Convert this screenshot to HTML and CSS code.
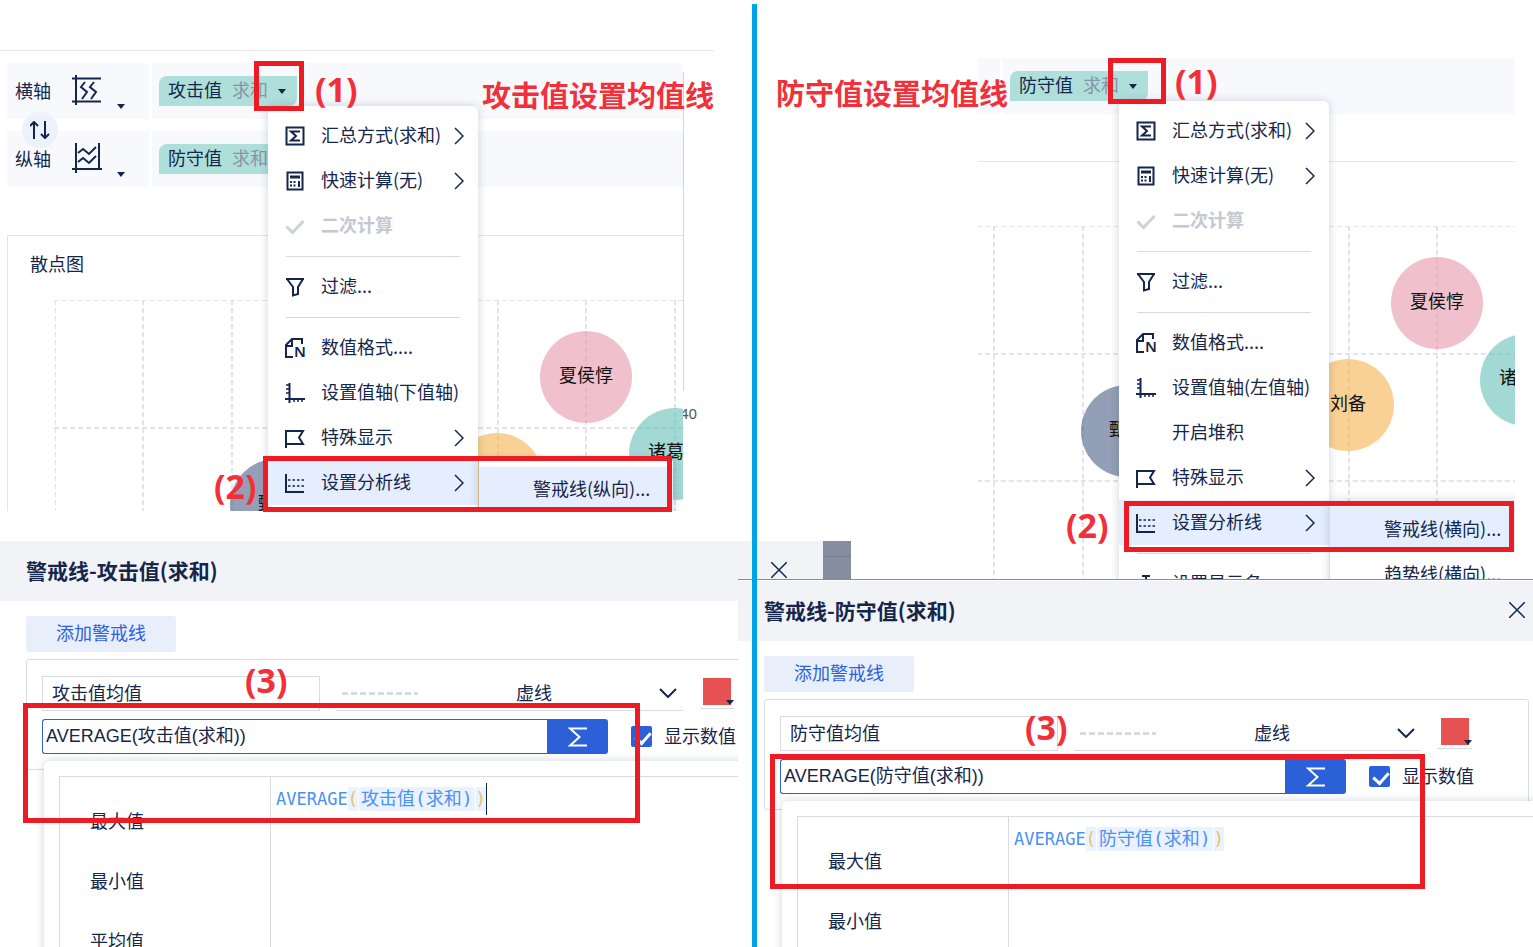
FILE: index.html
```html
<!DOCTYPE html>
<html lang="zh-CN">
<head>
  <meta charset="UTF-8">
  <title>设置均值线</title>
  <meta name="viewport" content="width=device-width, initial-scale=1.0">
  <link rel="stylesheet" href="styles.css">
</head>
<body>
  <!-- shared icons -->
  <svg class="sprite" aria-hidden="true">
    <symbol id="i-sum" viewBox="0 0 20 20"><path d="M1.5 1.5h17v17h-17z"/><path d="M15 5.5H6l5 4.5-5 4.5h9"/></symbol>
    <symbol id="i-calc" viewBox="0 0 20 20"><path d="M2.5 1.5h15v17h-15z"/><path d="M5 6h10" stroke-width="3"/><path d="M5 11h2m1.500 0h2M5 14.500h2m1.500 0h2M14 10v6"/></symbol>
    <symbol id="i-check" viewBox="0 0 20 20"><path d="M1.500 10.500l6 6L18.500 5" stroke-width="3"/></symbol>
    <symbol id="i-filter" viewBox="0 0 20 20"><path d="M1 2h18M2 2l6 8v8.500l5-1.500v-7l5-8"/></symbol>
    <symbol id="i-format" viewBox="0 0 20 20"><path d="M8 19H1V7l6-6h10v5M1 8h6V2"/><text x="9" y="19" font-size="15">N</text></symbol>
    <symbol id="i-axis" viewBox="0 0 20 20"><path d="M4.500 0v20M0 16h20"/><path d="M1 2h3M1 6h3M1 10h3M9 16v3M13 16v3M17 16v3" stroke-width="1.500"/></symbol>
    <symbol id="i-flag" viewBox="0 0 20 20"><path d="M1 20V3h17l-4 6.500 4 6.500H1"/></symbol>
    <symbol id="i-lines" viewBox="0 0 20 20"><path d="M1 1v18h18"/><path d="M3 7h16M3 13h16" stroke-width="1.500" stroke-dasharray="2.500 2"/></symbol>
    <symbol id="i-name" viewBox="0 0 20 20"><path d="M6 2h8M10 2v16M0 7h5M15 7h5"/></symbol>
    <symbol id="i-right" viewBox="0 0 10 18"><path d="M1 1l8 8-8 8"/></symbol>
    <symbol id="i-down" viewBox="0 0 18 10"><path d="M1 1l8 8 8-8"/></symbol>
    <symbol id="i-close" viewBox="0 0 16 16"><path d="M0 0l16 16M16 0L0 16"/></symbol>
    <symbol id="i-sigma" viewBox="0 0 20 20"><path d="M19 1.500H2l9.500 8.500L2 18.500h17"/></symbol>
    <symbol id="i-caret" viewBox="0 0 8 5"><path d="M0 0h8L4 5z"/></symbol>
    <symbol id="plot" viewBox="0 0 900 700">
      <g class="gridline">
        <path d="M55.500 300v400" stroke-width="1"/>
        <path d="M143 300v400M232 300v400M320 300v400M409 300v400M498 300v400M586 300v400M675 300v400"/>
        <path d="M54 300.500h646" stroke-width="1"/>
        <path d="M54 428h646M54 555h646"/>
      </g>
      <g stroke="none" fill-opacity=".6">
        <circle cx="276" cy="505" r="46" fill="#4a5f85"/>
        <circle cx="497" cy="479" r="46" fill="#f6b34d"/>
        <circle cx="586" cy="377" r="46" fill="#e698aa"/>
        <circle cx="675" cy="454" r="46" fill="#64c0b7"/>
      </g>
      <text x="276" y="510">甄姬</text>
      <text x="497" y="484">刘备</text>
      <text x="586" y="382">夏侯惇</text>
      <text x="675" y="458">诸葛亮</text>
    </symbol>
  </svg>

  <main class="board">
    <section class="half">
      <div class="scene scene-attack">
        <div class="axis-row">
          <div class="axis-label">
            <span>横轴</span>
            <svg class="axis-icon" viewBox="0 0 30 30"><path d="M4 0v30M0 3.500h29M0 26.500h29"/><path d="M13 7l-4 5 6 5-5 7M22 7l-4 5 6 5-5 7"/></svg>
            <svg class="caret"><use href="#i-caret"/></svg>
          </div>
          <div class="axis-drop">
            <div class="pill">
              <span>攻击值</span><span class="agg">求和</span><svg class="caret"><use href="#i-caret"/></svg>
              <ul class="menu">
                <li><button><svg class="icon"><use href="#i-sum"/></svg>汇总方式(求和)<svg class="more"><use href="#i-right"/></svg></button></li>
                <li><button><svg class="icon"><use href="#i-calc"/></svg>快速计算(无)<svg class="more"><use href="#i-right"/></svg></button></li>
                <li><button disabled><svg class="icon"><use href="#i-check"/></svg>二次计算</button></li>
                <li class="sep"></li>
                <li><button><svg class="icon"><use href="#i-filter"/></svg>过滤...</button></li>
                <li class="sep"></li>
                <li><button><svg class="icon"><use href="#i-format"/></svg>数值格式....</button></li>
                <li><button><svg class="icon"><use href="#i-axis"/></svg>设置值轴(下值轴)</button></li>
                <li><button><svg class="icon"><use href="#i-flag"/></svg>特殊显示<svg class="more"><use href="#i-right"/></svg></button></li>
                <li class="open">
                  <button><svg class="icon"><use href="#i-lines"/></svg>设置分析线<svg class="more"><use href="#i-right"/></svg></button>
                  <ul class="submenu">
                    <li class="open"><button>警戒线(纵向)...</button></li>
                  </ul>
                </li>
              </ul>
            </div>
          </div>
        </div>
        <button class="swap" aria-label="交换"><svg viewBox="0 0 20 18"><path d="M4 18V1M0 5l4-4 4 4M15 0v17M11 13l4 4 4-4"/></svg></button>
        <div class="axis-row">
          <div class="axis-label">
            <span>纵轴</span>
            <svg class="axis-icon" viewBox="0 0 30 30"><path d="M4 0v30M27 0v27M0 26h30"/><path d="M6 10l5-4 6 5 7-7M6 19l5-4 6 5 7-7"/></svg>
            <svg class="caret"><use href="#i-caret"/></svg>
          </div>
          <div class="axis-drop">
            <div class="pill"><span>防守值</span><span class="agg">求和</span><svg class="caret"><use href="#i-caret"/></svg></div>
          </div>
        </div>
        <div class="chart-card">
          <h3>散点图</h3>
          <div class="chart-body">
            <svg class="plot-attack" viewBox="54 300 629 211"><use href="#plot" width="900" height="700"/></svg>
            <span class="tick">40</span>
          </div>
        </div>
      </div>

      <div class="dialog">
        <header>
          <h2>警戒线-攻击值(求和)</h2>
          <button class="close" aria-label="关闭"><svg><use href="#i-close"/></svg></button>
        </header>
        <div class="dialog-body">
          <button class="add">添加警戒线</button>
          <div class="panel">
            <div class="panel-row">
              <input class="line-name" type="text" value="攻击值均值" aria-label="名称">
              <label class="line-style">
                <span class="dashes"></span>
                <select aria-label="线型"><option>虚线</option></select>
                <svg class="down"><use href="#i-down"/></svg>
              </label>
              <button class="color" aria-label="颜色"><span class="swatch"></span><svg class="caret"><use href="#i-caret"/></svg></button>
            </div>
            <div class="panel-row">
              <input class="formula" type="text" value="AVERAGE(攻击值(求和))" aria-label="公式">
              <button class="sigma" aria-label="函数"><svg><use href="#i-sigma"/></svg></button>
              <label class="show"><input type="checkbox" checked><span>显示数值</span></label>
            </div>
            <div class="popup">
              <div class="editor">
                <ul class="functions">
                  <li>最大值</li>
                  <li>最小值</li>
                  <li>平均值</li>
                </ul>
                <div class="code"><span>AVERAGE</span><span class="paren">(</span><span class="chip">攻击值(求和)</span><span class="paren">)</span><span class="cursor"></span></div>
              </div>
            </div>
          </div>
        </div>
      </div>

      <strong class="note title-attack">攻击值设置均值线</strong>
      <strong class="note num attack-1">(1)</strong>
      <strong class="note num attack-2">(2)</strong>
      <strong class="note num attack-3">(3)</strong>
      <div class="frame frame-attack-1"></div>
      <div class="frame frame-attack-2"></div>
      <div class="frame frame-attack-3"></div>
    </section>

    <div class="divider"></div>

    <section class="half">
      <div class="scene scene-defend">
        <div class="axis-row">
          <div class="axis-label"></div>
          <div class="axis-drop">
            <div class="pill">
              <span>防守值</span><span class="agg">求和</span><svg class="caret"><use href="#i-caret"/></svg>
              <ul class="menu">
                <li><button><svg class="icon"><use href="#i-sum"/></svg>汇总方式(求和)<svg class="more"><use href="#i-right"/></svg></button></li>
                <li><button><svg class="icon"><use href="#i-calc"/></svg>快速计算(无)<svg class="more"><use href="#i-right"/></svg></button></li>
                <li><button disabled><svg class="icon"><use href="#i-check"/></svg>二次计算</button></li>
                <li class="sep"></li>
                <li><button><svg class="icon"><use href="#i-filter"/></svg>过滤...</button></li>
                <li class="sep"></li>
                <li><button><svg class="icon"><use href="#i-format"/></svg>数值格式....</button></li>
                <li><button><svg class="icon"><use href="#i-axis"/></svg>设置值轴(左值轴)</button></li>
                <li><button><span class="icon"></span>开启堆积</button></li>
                <li><button><svg class="icon"><use href="#i-flag"/></svg>特殊显示<svg class="more"><use href="#i-right"/></svg></button></li>
                <li class="open">
                  <button><svg class="icon"><use href="#i-lines"/></svg>设置分析线<svg class="more"><use href="#i-right"/></svg></button>
                  <ul class="submenu">
                    <li class="open"><button>警戒线(横向)...</button></li>
                    <li><button>趋势线(横向)...</button></li>
                  </ul>
                </li>
                <li class="sep"></li>
                <li><button><svg class="icon"><use href="#i-name"/></svg>设置显示名</button></li>
              </ul>
            </div>
          </div>
        </div>
        <hr>
        <svg class="plot-defend" viewBox="127 300 537 353"><use href="#plot" width="900" height="700"/></svg>
      </div>

      <div class="dialog dialog-defend">
        <header>
          <h2>警戒线-防守值(求和)</h2>
          <button class="close" aria-label="关闭"><svg><use href="#i-close"/></svg></button>
        </header>
        <div class="dialog-body">
          <button class="add">添加警戒线</button>
          <div class="panel">
            <div class="panel-row">
              <input class="line-name" type="text" value="防守值均值" aria-label="名称">
              <label class="line-style">
                <span class="dashes"></span>
                <select aria-label="线型"><option>虚线</option></select>
                <svg class="down"><use href="#i-down"/></svg>
              </label>
              <button class="color" aria-label="颜色"><span class="swatch"></span><svg class="caret"><use href="#i-caret"/></svg></button>
            </div>
            <div class="panel-row">
              <input class="formula" type="text" value="AVERAGE(防守值(求和))" aria-label="公式">
              <button class="sigma" aria-label="函数"><svg><use href="#i-sigma"/></svg></button>
              <label class="show"><input type="checkbox" checked><span>显示数值</span></label>
            </div>
            <div class="popup">
              <div class="editor">
                <ul class="functions">
                  <li>最大值</li>
                  <li>最小值</li>
                </ul>
                <div class="code"><span>AVERAGE</span><span class="paren">(</span><span class="chip">防守值(求和)</span><span class="paren">)</span></div>
              </div>
            </div>
          </div>
        </div>
      </div>

      <strong class="note title-defend">防守值设置均值线</strong>
      <strong class="note num defend-1">(1)</strong>
      <strong class="note num defend-2">(2)</strong>
      <strong class="note num defend-3">(3)</strong>
      <div class="frame frame-defend-1"></div>
      <div class="frame frame-defend-2"></div>
      <div class="frame frame-defend-3"></div>
    </section>
  </main>
</body>
</html>
```

FILE: styles.css
```css
* {
  box-sizing: border-box;
}

body {
  margin: 0;
  background: #fff;
  color: #14264b;
  font-family: "Noto Sans CJK SC", sans-serif;
  font-size: 18px;
  line-height: 24px;
}

button, input, select {
  margin: 0;
  padding: 0;
  border: none;
  border-radius: 0;
  background: none;
  color: inherit;
  font: inherit;
}

ul, h2, h3 {
  margin: 0;
  padding: 0;
  list-style: none;
}

svg {
  flex: none;
  fill: none;
  stroke: #14264b;
  stroke-width: 2;
}

.sprite {
  position: absolute;
  width: 0;
  height: 0;
}

.sprite text {
  fill: #14264b;
  stroke: none;
  font-family: "Noto Sans", sans-serif;
  font-weight: 600;
}

#plot text {
  fill: #111;
  font-family: "Noto Sans CJK SC", sans-serif;
  font-size: 18px;
  font-weight: 400;
  text-anchor: middle;
}

.gridline {
  stroke: #e4e4e6;
  stroke-dasharray: 5 3;
}

.board {
  display: grid;
  grid-template-columns: 752fr 5px 776fr;
  height: 100vh;
  overflow: hidden;
}

.half {
  position: relative;
  display: flex;
  flex-direction: column;
  min-width: 0;
}

.divider {
  position: relative;
  z-index: 3;
  margin-top: 4px;
  background: #00a2e8;
}

/* axes */

.scene {
  position: relative;
  flex: none;
}

.scene-attack {
  height: 511px;
  width: 714px;
  margin-bottom: 30px;
  padding: 50px 31px 0 7px;
  overflow: hidden;
}

.scene-attack::before {
  content: "";
  display: block;
  height: 1px;
  margin: 0 -31px 12px -7px;
  background: #e3e4ee;
}

.scene-attack::after {
  content: "";
  position: absolute;
  top: 72px;
  right: 30px;
  width: 1px;
  height: 319px;
  background: #d4d5d9;
}

.scene-defend {
  height: 579px;
  margin: 0 18px 0 221px;
  padding-top: 58px;
  overflow: hidden;
}

.scene-defend hr {
  height: 1px;
  margin: 47px 0 64px;
  border: none;
  background: #e3e5ea;
}

.axis-row {
  display: flex;
  gap: 3px;
  height: 56px;
  margin-bottom: 12px;
}

.axis-label {
  display: flex;
  align-items: center;
  width: 142px;
  padding: 0 0 2px 8px;
  background: #f8f9fd;
}

.scene-defend .axis-label {
  width: 22px;
}

.axis-icon {
  width: 30px;
  height: 30px;
  margin: 0 15px 0 21px;
}

.axis-label .caret {
  align-self: flex-end;
  margin-bottom: 8px;
}

.axis-drop {
  display: flex;
  flex: 1;
  align-items: center;
  padding-left: 7px;
  background: #f8f9fd;
}

.caret {
  width: 8px;
  height: 5px;
  fill: #14264b;
  stroke: none;
}

.pill {
  position: relative;
  display: flex;
  align-items: center;
  gap: 10px;
  height: 30px;
  padding: 0 11px 4px 9px;
  border-radius: 8px 0;
  background: #aedfda;
}

.pill > .caret {
  margin-top: 4px;
}

.agg {
  color: #8a94a8;
}

.swap {
  position: absolute;
  top: 112px;
  left: 22px;
  display: flex;
  align-items: center;
  justify-content: center;
  width: 36px;
  height: 36px;
  border-radius: 50%;
  background: #edf1fb;
}

.swap svg {
  width: 20px;
  height: 18px;
}

/* menus */

.menu, .submenu {
  position: absolute;
  background: #fff;
  box-shadow: 0 0 10px rgba(20, 38, 75, .2);
}

.menu {
  z-index: 1;
  top: 30px;
  left: 109px;
  width: 210px;
  padding: 7px 0;
  border-radius: 6px;
}

.submenu {
  top: 1px;
  left: 211px;
  width: 194px;
  padding: 6px 0;
}

.menu li {
  position: relative;
}

.menu button {
  display: flex;
  align-items: center;
  width: 100%;
  height: 45px;
  padding: 0 14px 4px 17px;
  white-space: nowrap;
}

.menu button:disabled {
  color: #c5c8d1;
  font-weight: 700;
}

.menu button:disabled svg {
  stroke: #cfd1d9;
}

.menu .open > button {
  background: #e5eeff;
}

.menu .submenu button {
  padding-left: 54px;
}

.icon {
  width: 20px;
  height: 20px;
  margin: 4px 16px 0 0;
}

.more {
  width: 10px;
  height: 18px;
  margin: 4px 0 0 auto;
  stroke-width: 1.5;
}

.sep {
  height: 16px;
  padding: 8px 18px 0;
}

.sep::before {
  content: "";
  display: block;
  height: 1px;
  background: #d6d9e2;
}

/* charts */

.chart-card {
  height: 300px;
  margin-top: 48px;
  padding: 15px 0 0 22px;
  border-top: 1px solid #e3e5ea;
  border-left: 1px solid #e3e5ea;
}

.chart-card h3 {
  margin-bottom: 25px;
  font-size: 18px;
  font-weight: 400;
}

.chart-body {
  display: flex;
  margin-left: 24px;
}

.plot-attack {
  width: 629px;
  height: 211px;
}

.plot-defend {
  display: block;
  width: 537px;
  height: 353px;
}

.tick {
  height: 24px;
  margin: 101px -20px 0 0;
  overflow: hidden;
  color: #555;
  font-family: "Noto Sans", sans-serif;
  font-size: 15px;
  text-indent: -3px;
}

/* dialogs */

.dialog {
  position: relative;
  z-index: 1;
  flex: 1;
  width: 823px;
  background: #fff;
}

.dialog-defend {
  z-index: 2;
  margin-left: -19px;
  padding-top: 1px;
  border-top: 1px solid #858d9e;
}

.dialog header {
  position: relative;
  display: flex;
  align-items: center;
  justify-content: space-between;
  height: 60px;
  padding: 0 36px 2px 26px;
  background: #f2f3f7;
}

.dialog header::after {
  content: "";
  position: absolute;
  top: 0;
  left: 100%;
  width: 28px;
  height: 60px;
  background: linear-gradient(#858d9e 15px, #777f91 15px, #777f91 16px, #858d9e 16px);
}

.dialog h2 {
  font-size: 21px;
  font-weight: 700;
}

.close {
  height: 16px;
  line-height: 0;
}

.close svg {
  width: 16px;
  height: 16px;
  stroke-width: 1.5;
}

.dialog-body {
  padding: 15px 32px 0 26px;
}

.add {
  display: block;
  width: 150px;
  height: 36px;
  margin-bottom: 7px;
  padding-bottom: 4px;
  border-radius: 3px;
  background: #e8effb;
  color: #2d60de;
}

.panel {
  position: relative;
  display: flex;
  flex-direction: column;
  gap: 8px;
  padding: 16px 15px 15px;
  border: 1px solid #d9dbe3;
  border-radius: 3px;
}

.panel-row {
  display: flex;
  height: 35px;
}

.line-name {
  width: 278px;
  margin-right: 15px;
  padding: 0 9px 4px;
  border: 1px solid #d9dbe3;
}

.line-style {
  display: flex;
  align-items: center;
  width: 349px;
  margin-right: 16px;
  padding: 0 7px;
  border-bottom: 1px solid #d9dbe3;
  border-radius: 3px;
}

.dashes {
  width: 76px;
  height: 3px;
  background: repeating-linear-gradient(90deg, #d9dbe3 0 6px, transparent 6px 9px);
}

.line-style select {
  flex: 1;
  padding: 0 0 2px 98px;
  appearance: none;
}

.down {
  width: 18px;
  height: 10px;
}

.color {
  position: relative;
  width: 34px;
  height: 33px;
  border-bottom: 1px solid #d9dbe3;
}

.swatch {
  display: block;
  width: 28px;
  height: 27px;
  margin: 0 3px 1px;
  background: #e65251;
}

.color .caret {
  position: absolute;
  right: 0;
  bottom: 3px;
}

.formula {
  width: 505px;
  padding: 0 3px 2px;
  border: 1px solid #2b60d8;
  border-right: none;
  border-radius: 3px 0 0 3px;
  font-family: "Liberation Sans", "Noto Sans CJK SC", sans-serif;
}

.sigma {
  display: flex;
  align-items: center;
  justify-content: center;
  width: 61px;
  margin-right: 23px;
  border-radius: 0 3px 3px 0;
  background: #2b60d8;
}

.sigma svg {
  width: 20px;
  height: 20px;
  stroke: #fff;
}

.show {
  display: flex;
  align-items: center;
  gap: 12px;
}

.show span {
  padding-bottom: 4px;
}

.show input {
  position: relative;
  width: 21px;
  height: 21px;
  border-radius: 2px;
  background: #2b60d8;
  appearance: none;
}

.show input::after {
  content: "";
  position: absolute;
  top: 3px;
  left: 7px;
  width: 7px;
  height: 12px;
  border: solid #fff;
  border-width: 0 3px 3px 0;
  transform: rotate(42deg);
}

.popup {
  position: absolute;
  top: 101px;
  left: 17px;
  width: 900px;
  height: 400px;
  padding: 15px;
  border-radius: 6px;
  background: #fff;
  box-shadow: 0 0 10px rgba(20, 38, 75, .2);
}

.editor {
  display: flex;
  height: 100%;
  border: 1px solid #d9dbe3;
}

.functions {
  width: 211px;
  padding: 13px 0 0 30px;
  border-right: 1px solid #d9dbe3;
}

.functions li {
  line-height: 60px;
}

.code {
  display: flex;
  align-items: center;
  height: 32px;
  margin: 6px 0 0 5px;
  color: #4a90f5;
  font-family: "DejaVu Sans Mono", "Noto Sans CJK SC", monospace;
  font-size: 17px;
}

.paren {
  background: #eaf2fe;
  color: #e3c26b;
}

.chip {
  margin: 0 1px;
  padding: 0 2px;
  border-radius: 3px;
  background: #eaf2fe;
  font-size: 18px;
}

.cursor {
  width: 1px;
  height: 32px;
  background: #14264b;
}

/* annotations */

.note {
  position: absolute;
  z-index: 4;
  color: #f2303a;
  font-size: 29px;
  line-height: 40px;
  white-space: nowrap;
}

.num {
  font-family: "Noto Sans", sans-serif;
  font-size: 34px;
}

.title-attack { top: 74px; left: 482px; }
.attack-1 { top: 69px; left: 315px; }
.attack-2 { top: 466px; left: 214px; }
.attack-3 { top: 660px; left: 245px; }

.title-defend { top: 72px; left: 19px; }
.defend-1 { top: 61px; left: 418px; }
.defend-2 { top: 505px; left: 309px; }
.defend-3 { top: 707px; left: 268px; }

.frame {
  position: absolute;
  z-index: 4;
  border: 5px solid #ed1c24;
}

.frame-attack-1 { top: 61px; left: 254px; width: 50px; height: 50px; }
.frame-attack-2 { top: 456px; left: 263px; width: 409px; height: 56px; }
.frame-attack-3 { top: 703px; left: 23px; width: 617px; height: 120px; }

.frame-defend-1 { top: 58px; left: 351px; width: 58px; height: 46px; }
.frame-defend-2 { top: 501px; left: 367px; width: 390px; height: 51px; }
.frame-defend-3 { top: 754px; left: 13px; width: 655px; height: 135px; }
```
